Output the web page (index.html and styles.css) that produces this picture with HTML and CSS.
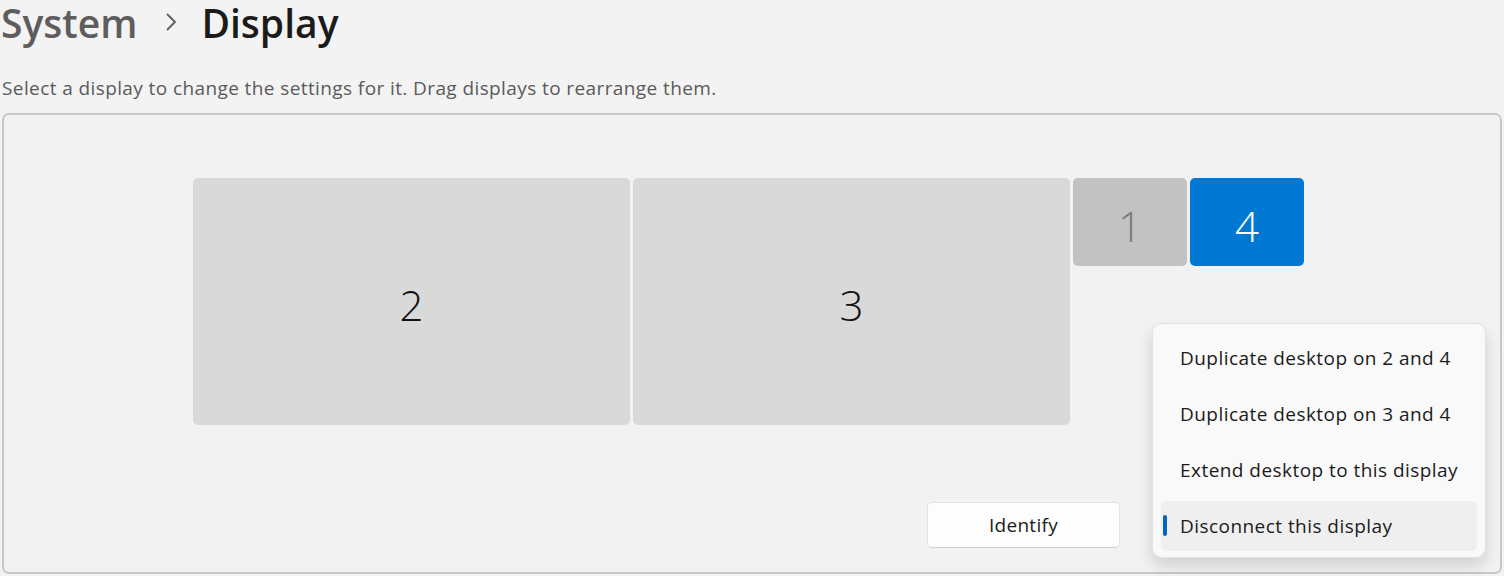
FILE: index.html
```html
<!DOCTYPE html>
<html lang="en">
<head>
<meta charset="utf-8">
<title>Display</title>
<link rel="stylesheet" href="styles.css">
</head>
<body>
<header class="crumbs">
  <span class="crumb-parent">System</span>
  <svg class="crumb-sep" width="12" height="18" viewBox="0 0 12 18"><path d="M2.5 1.5 L10 9 L2.5 16.5" fill="none" stroke="#5f5f5f" stroke-width="1.8" stroke-linecap="round" stroke-linejoin="round"/></svg>
  <span class="crumb-current">Display</span>
</header>
<p class="hint">Select a display to change the settings for it. Drag displays to rearrange them.</p>
<section class="panel">
  <div class="canvas">
    <div class="mon mon-2">2</div>
    <div class="mon mon-3">3</div>
    <div class="mon mon-1">1</div>
    <div class="mon mon-4">4</div>
  </div>
  <div class="actions">
    <button class="btn">Identify</button>
  </div>
  <ul class="menu">
    <li class="menu-item">Duplicate desktop on 2 and 4</li>
    <li class="menu-item">Duplicate desktop on 3 and 4</li>
    <li class="menu-item">Extend desktop to this display</li>
    <li class="menu-item is-active"><span class="indicator"></span>Disconnect this display</li>
  </ul>
</section>
</body>
</html>
```
FILE: styles.css
```css
html, body {
  margin: 0;
  padding: 0;
  background: #f3f3f3;
  font-family: "Open Sans", "Noto Sans", sans-serif;
  color: #1b1b1b;
}
body {
  width: 1504px;
  height: 576px;
  overflow: hidden;
}
.crumbs {
  display: flex;
  align-items: center;
  padding-left: 1px;
  height: 46px;
  font-size: 39px;
  line-height: 46px;
  font-weight: 600;
}
.crumb-parent { color: #5d5d5d; }
.crumb-sep { margin: 0 24px 3px 28px; }
.crumb-current { color: #1b1b1b; }
.hint {
  margin: 30px 0 0 2px;
  font-size: 19px;
  line-height: 24px;
  color: #5a5a5a;
  letter-spacing: 0.4px;
}
.panel {
  position: relative;
  margin: 13px 0 0 2px;
  width: 1496px;
  height: 457px;
  border: 2px solid #c9c9c9;
  border-radius: 7px;
  background: #f2f2f2;
  display: flex;
  flex-direction: column;
}
.canvas {
  position: relative;
  height: 387px;
}
.mon {
  position: absolute;
  top: 63px;
  display: flex;
  align-items: center;
  justify-content: center;
  box-sizing: border-box;
  padding-top: 6px;
  border-radius: 5px;
  background: #d9d9d9;
  color: #111;
  font-size: 42px;
  font-weight: 300;
}
.mon-2 { left: 189px; width: 437px; height: 247px; }
.mon-3 { left: 629px; width: 437px; height: 247px; }
.mon-1 { left: 1069px; width: 114px; height: 88px; background: #c2c2c2; color: #7a7a7a; }
.mon-4 { left: 1186px; width: 114px; height: 88px; background: #0078d4; color: #fff; }
.actions {
  display: flex;
  justify-content: flex-end;
  padding-right: 380px;
}
.btn {
  width: 193px;
  height: 46px;
  border: 1px solid #e3e3e3;
  border-bottom-color: #cfcfcf;
  border-radius: 5px;
  background: #fdfdfd;
  font-family: inherit;
  font-size: 19px;
  letter-spacing: 0.3px;
  color: #1b1b1b;
  padding: 0;
}
.menu {
  position: absolute;
  left: 1148px;
  top: 208px;
  width: 316px;
  margin: 0;
  padding: 9px 8px 6px 8px;
  list-style: none;
  background: #f9f9f9;
  border: 1px solid #e2e2e2;
  border-radius: 10px;
  box-shadow: 0 8px 16px rgba(0,0,0,0.14);
  display: flex;
  flex-direction: column;
  gap: 6px;
}
.menu-item {
  position: relative;
  height: 50px;
  display: flex;
  align-items: center;
  padding-left: 19px;
  border-radius: 5px;
  font-size: 19px;
  color: #1b1b1b;
  letter-spacing: 0.45px;
}
.menu-item.is-active { background: #efefef; }
.indicator {
  position: absolute;
  left: 2px;
  top: 14px;
  width: 4px;
  height: 21px;
  border-radius: 2px;
  background: #0067c0;
}
```
